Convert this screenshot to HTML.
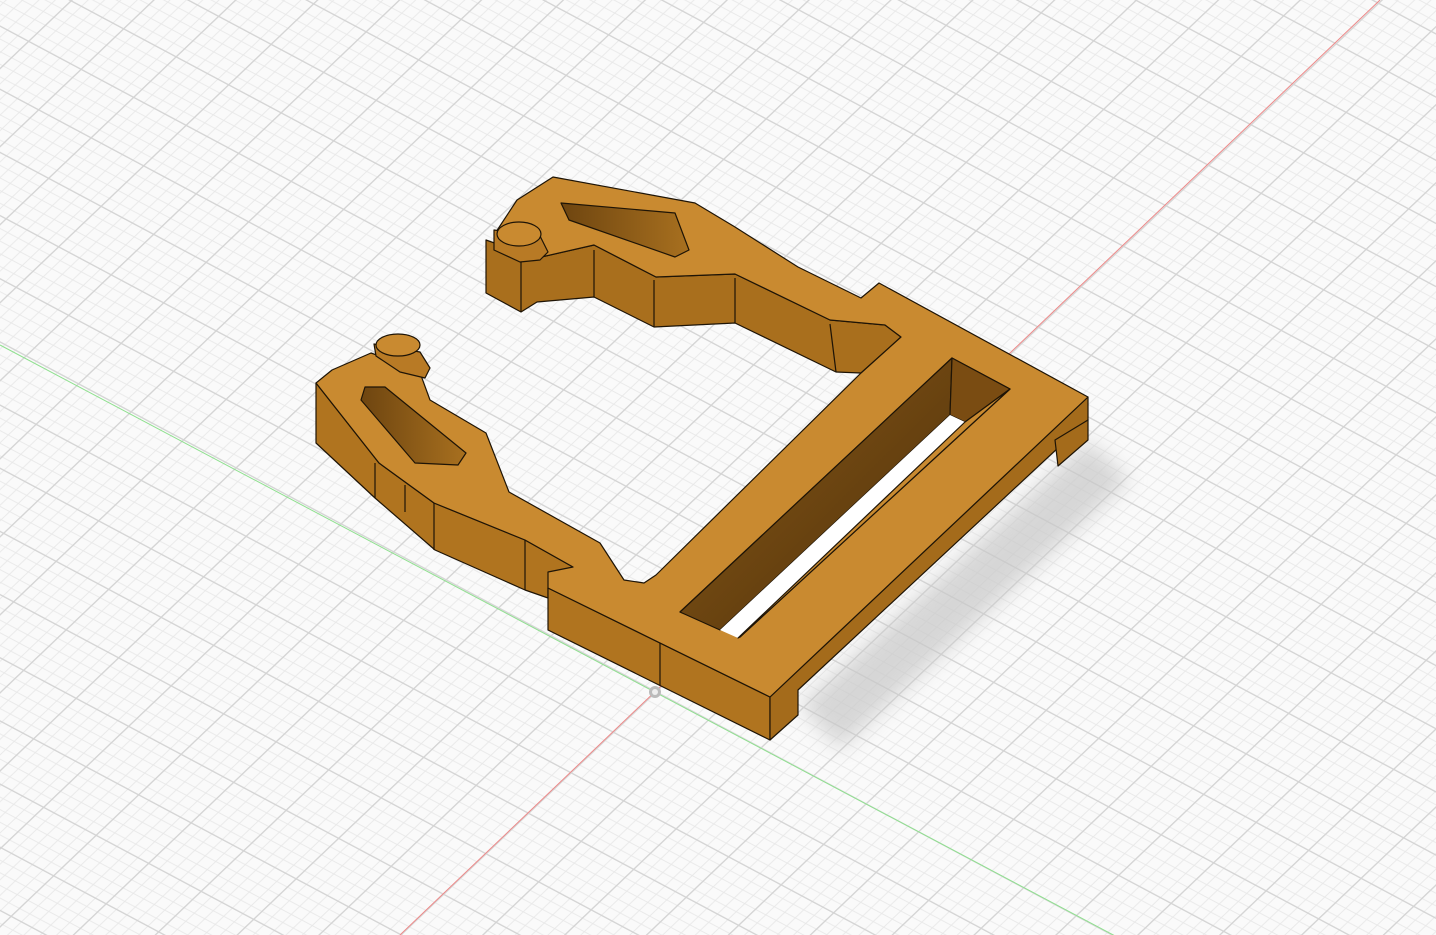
<!DOCTYPE html>
<html><head><style>html,body{margin:0;padding:0;background:#fafafa;overflow:hidden;width:1436px;height:935px}svg{display:block}</style></head>
<body>
<svg width="1436" height="935" viewBox="0 0 1436 935" xmlns="http://www.w3.org/2000/svg">
<defs>
<pattern id="g" width="50" height="50" patternUnits="userSpaceOnUse" patternTransform="matrix(1.05,0.56,0.85,-0.81,655,692)">
<g fill="#e8e8e8">
<rect x="10" y="0" width="0.8" height="50"/><rect x="20" y="0" width="0.8" height="50"/><rect x="30" y="0" width="0.8" height="50"/><rect x="40" y="0" width="0.8" height="50"/>
<rect y="10" x="0" height="0.8" width="50"/><rect y="20" x="0" height="0.8" width="50"/><rect y="30" x="0" height="0.8" width="50"/><rect y="40" x="0" height="0.8" width="50"/>
</g>
<g fill="#d4d4d4"><rect x="0" y="0" width="1.2" height="50"/><rect x="0" y="0" width="50" height="1.2"/></g>
</pattern>
<linearGradient id="hole" x1="0" y1="0" x2="1" y2="0"><stop offset="0" stop-color="#6e4510"/><stop offset="1" stop-color="#a8701f"/></linearGradient>
<linearGradient id="slot" x1="0" y1="0" x2="1" y2="1"><stop offset="0" stop-color="#8a5a18"/><stop offset="1" stop-color="#4e300a"/></linearGradient>
<filter id="bl"><feGaussianBlur stdDeviation="10"/></filter>
</defs>
<rect width="1436" height="935" fill="#fafafa"/>
<rect width="1436" height="935" fill="url(#g)"/>
<line x1="0" y1="345" x2="1436" y2="1106" stroke="#8fe08f" stroke-width="1"/>
<line x1="1380" y1="0" x2="400" y2="935" stroke="#e88" stroke-width="1"/>
<circle cx="655" cy="692" r="6" fill="#bbb"/><circle cx="655" cy="692" r="3" fill="#eee"/>
<polygon points="800,705 1088,440 1130,480 840,750" fill="#c8c8c8" filter="url(#bl)" opacity="0.7"/>
<g stroke="#1e1406" stroke-width="1.2" stroke-linejoin="round">
<polygon fill="#b0741f" points="316,383 379,463 434,503 525,540 573,567 548,588 548,598 525,590 435,550 375,498 316,443"/>
<line x1="375" y1="463" x2="375" y2="498"/><line x1="405" y1="485" x2="405" y2="512"/><line x1="434" y1="503" x2="434" y2="550"/><line x1="525" y1="540" x2="525" y2="590"/>
<polygon fill="#a96f1d" points="486,240 537,258 594,245 656,277 735,274 830,320 885,325 901,337 861,373 836,372 735,323 654,327 594,297 537,302 521,312 486,293"/>
<line x1="594" y1="250" x2="594" y2="297"/><line x1="654" y1="280" x2="654" y2="327"/><line x1="735" y1="278" x2="735" y2="323"/><line x1="830" y1="324" x2="836" y2="372"/><line x1="521" y1="262" x2="521" y2="312"/>
<polygon fill="#b0741f" points="548,588 770,697 770,740 548,630"/>
<line x1="660" y1="642" x2="660" y2="686"/>
<polygon fill="#a46b1b" points="770,697 1088,397 1088,420 798,690 798,715 770,740"/>
<polygon fill="#a46b1b" points="1055,440 1088,420 1088,440 1058,466"/>
<path fill="#c98a30" fill-rule="evenodd" d="M316,383 L332,370 L371,353 L419,370 L430,400 L486,433 L509,492 L600,543 L624,580 L644,583 L656,575 L861,373 L901,337 L885,325 L830,320 L735,274 L656,277 L594,245 L537,258 L494,235 L517,200 L553,177 L695,203 L735,227 L798,267 L861,298 L879,283 L1088,397 L770,697 L548,588 L548,572 L573,567 L525,540 L434,503 L379,463 Z M680,612 L952,358 L1010,389 L740,637 Z"/>
<polygon fill="url(#slot)" points="680,612 952,358 950,415 720,630"/>
<polygon fill="#7a4c12" points="952,358 1010,389 965,422 950,415"/>
<polygon fill="#ffffff" stroke="none" points="720,630 950,415 965,422 738,638"/>
<polygon fill="#c98a30" points="738,638 965,422 1010,389 740,637"/>
<polygon fill="url(#hole)" points="561,203 675,213 689,250 675,257 569,220"/>
<polygon fill="url(#hole)" points="365,387 385,387 466,453 458,465 415,463 361,400"/>
<path fill="#b87a25" d="M494,230 L540,236 L548,252 L540,260 L520,262 L494,250 Z"/>
<ellipse cx="519" cy="234" rx="22" ry="12" fill="#c98a30"/>
<path fill="#b87a25" d="M374,344 L420,352 L430,368 L425,378 L400,372 L376,356 Z"/>
<ellipse cx="398" cy="345" rx="22" ry="11" fill="#c98a30"/>
</g>
</svg>
</body></html>
